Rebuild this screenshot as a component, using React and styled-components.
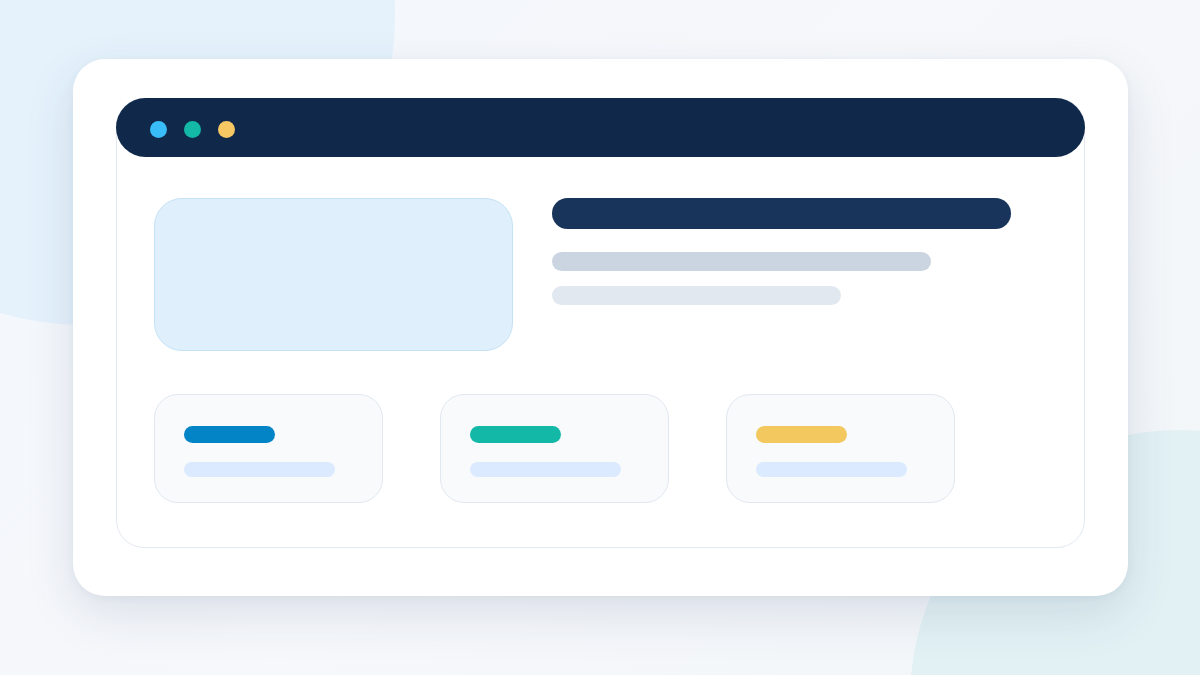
import React from 'react';
import styled, { createGlobalStyle } from 'styled-components';

const GlobalStyle = createGlobalStyle`
  html, body {
    margin: 0;
    padding: 0;
  }
  body {
    font-family: "Inter", "Liberation Sans", sans-serif;
    background: #f4f7fb;
  }
`;

// Page with soft background blobs
const Page = styled.div`
  position: relative;
  width: 1200px;
  height: 675px;
  overflow: hidden;
  background: linear-gradient(135deg, #f3f7fc 0%, #f6f8fb 50%, #f2f6f9 100%);
  display: flex;
  justify-content: center;
  align-items: flex-start;
  padding-top: 59px;
  box-sizing: border-box;
`;

const Blob = styled.div`
  position: absolute;
  border-radius: 50%;
  width: ${(p) => p.size}px;
  height: ${(p) => p.size}px;
  left: ${(p) => p.x}px;
  top: ${(p) => p.y}px;
  background: ${(p) => p.color};
`;

const Card = styled.div`
  position: relative;
  z-index: 1;
  width: 1055px;
  height: 537px;
  box-sizing: border-box;
  padding: 39px 43px 48px;
  background: #ffffff;
  border-radius: 32px;
  box-shadow: 0 18px 50px rgba(30, 60, 100, 0.12), 0 2px 8px rgba(30, 60, 100, 0.05);
`;

const Frame = styled.div`
  height: 100%;
  box-sizing: border-box;
  border: 1px solid #e3e9f1;
  border-radius: 28px;
  display: flex;
  flex-direction: column;
`;

const TopBar = styled.div`
  height: 59px;
  box-sizing: border-box;
  margin: -1px -1px 0;
  background: #10284a;
  border-radius: 30px;
  display: flex;
  align-items: center;
  gap: 17px;
  padding: 3px 0 0 34px;
`;

const Dot = styled.span`
  width: 17px;
  height: 17px;
  border-radius: 50%;
  background: ${(p) => p.color};
`;

const Content = styled.div`
  padding: 41px 37px 44px;
  display: flex;
  flex-direction: column;
  gap: 43px;
`;

const HeroRow = styled.div`
  display: flex;
  gap: 39px;
`;

const HeroImage = styled.div`
  width: 359px;
  height: 153px;
  box-sizing: border-box;
  background: #dff0fc;
  border: 1px solid #c4e2f5;
  border-radius: 28px;
`;

const TextCol = styled.div`
  display: flex;
  flex-direction: column;
`;

const Bar = styled.div`
  flex-shrink: 0;
  width: ${(p) => p.w}px;
  height: ${(p) => p.h}px;
  margin-top: ${(p) => p.mt || 0}px;
  background: ${(p) => p.color};
  border-radius: 999px;
`;

const CardRow = styled.div`
  display: flex;
  gap: 57px;
`;

const MiniCard = styled.div`
  width: 229px;
  height: 109px;
  box-sizing: border-box;
  padding: 31px 29px 0;
  background: #f8fafc;
  border: 1px solid #e2e8f0;
  border-radius: 24px;
  display: flex;
  flex-direction: column;
  gap: 19px;
`;

const cards = ['#0284c7', '#14b8a6', '#f2c85f'];

export default function App() {
  return (
    <>
      <GlobalStyle />
      <Page>
        <Blob size={620} x={-225} y={-295} color="#e5f2fc" />
        <Blob size={540} x={910} y={430} color="#e2f1f4" />
        <Card>
          <Frame>
            <TopBar>
              <Dot color="#38bdf8" />
              <Dot color="#14b8a6" />
              <Dot color="#f5c863" />
            </TopBar>
            <Content>
              <HeroRow>
                <HeroImage />
                <TextCol>
                  <Bar w={459} h={31} color="#18345a" />
                  <Bar w={379} h={19} mt={23} color="#cbd5e1" />
                  <Bar w={289} h={19} mt={15} color="#e2e8f0" />
                </TextCol>
              </HeroRow>
              <CardRow>
                {cards.map((c) => (
                  <MiniCard key={c}>
                    <Bar w={91} h={17} color={c} />
                    <Bar w={151} h={15} color="#dbeafe" />
                  </MiniCard>
                ))}
              </CardRow>
            </Content>
          </Frame>
        </Card>
      </Page>
    </>
  );
}
